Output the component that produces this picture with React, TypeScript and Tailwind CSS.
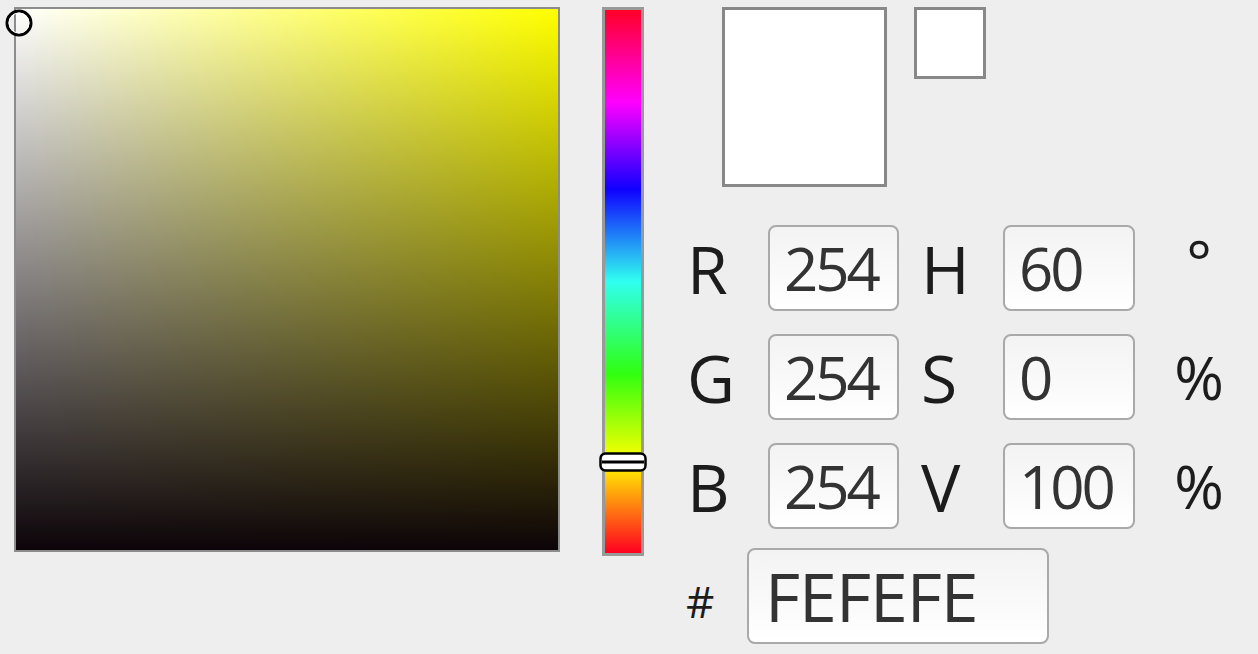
import React from "react";

const font = { fontFamily: '"Open Sans", "Noto Sans", sans-serif' };

function Field({ value, w = "w-[131px]" }: { value: string; w?: string }) {
  return (
    <div
      className={`${w} h-[86px] rounded-[8px] border-2 border-[#a9a9a9] bg-linear-to-b from-[#f3f3f3] to-white flex items-center pl-[14px] text-[60px] leading-none tracking-[-3px] text-[#333]`}
    >
      {value}
    </div>
  );
}

export default function App() {
  const rows = [
    { l: "R", v: "254", l2: "H", v2: "60", u: "°" },
    { l: "G", v: "254", l2: "S", v2: "0", u: "%" },
    { l: "B", v: "254", l2: "V", v2: "100", u: "%" },
  ];

  return (
    <div
      className="w-[1258px] h-[654px] bg-[#eeeeee] flex items-start pl-[14px] pt-[7px] overflow-hidden"
      style={font}
    >
      {/* saturation / value square */}
      <div className="relative w-[546px] h-[545px] border-2 border-[#8c8c8c] shrink-0">
        <div className="w-full h-full bg-[#ffff00]">
          <div className="w-full h-full bg-linear-to-r from-white to-[#ffffff00]">
            <div className="w-full h-full bg-linear-to-t from-[#0c0408] to-[#0c040800]" />
          </div>
        </div>
        <svg
          className="absolute left-[-12px] top-[-1px]"
          width="30"
          height="30"
          viewBox="0 0 30 30"
        >
          <circle cx="15" cy="15" r="12" fill="none" stroke="#000" strokeWidth="3" />
          <circle cx="15" cy="15" r="10" fill="none" stroke="#fff" strokeWidth="1" />
        </svg>
      </div>

      {/* hue bar */}
      <div className="relative ml-[42px] w-[42px] h-[549px] border-[3px] border-[#999] shrink-0">
        <div className="w-full h-full bg-[linear-gradient(to_bottom,#ff0028_0%,#ff00ff_17%,#1000ff_33%,#30fff0_50%,#30ff10_67%,#ffff00_83%,#ff0020_100%)]" />
        <svg
          className="absolute left-[-6px] top-[442px]"
          width="48"
          height="20"
          viewBox="0 0 48 20"
        >
          <rect x="1.5" y="1.5" width="45" height="17" rx="5" fill="#fff" stroke="#000" strokeWidth="2.5" />
          <line x1="3" y1="10" x2="45" y2="10" stroke="#000" strokeWidth="3" />
        </svg>
      </div>

      {/* right panel */}
      <div className="ml-[42px] flex flex-col">
        <div className="ml-[36px] flex items-start gap-[27px]">
          <div className="w-[165px] h-[180px] border-[3px] border-[#888] bg-white" />
          <div className="w-[72px] h-[72px] border-[3px] border-[#888] bg-white" />
        </div>

        <div className="mt-[38px] grid grid-cols-[82px_131px_104px_132px_128px] gap-y-[23px]">
          {rows.map((r) => (
            <React.Fragment key={r.l}>
              <div className="h-[86px] flex items-center pl-[1px] text-[66px] leading-none text-[#1c1c1c]">
                {r.l}
              </div>
              <Field value={r.v} />
              <div className="h-[86px] flex items-center pl-[22px] text-[66px] leading-none text-[#1c1c1c]">
                {r.l2}
              </div>
              <Field value={r.v2} w="w-[132px]" />
              <div
                className={`h-[86px] flex justify-center text-[#1c1c1c] leading-none ${
                  r.u === "°" ? "items-start pt-[6px] text-[60px]" : "items-center text-[60px]"
                }`}
              >
                {r.u}
              </div>
            </React.Fragment>
          ))}
        </div>

        <div className="mt-[19px] flex items-center">
          <div className="w-[61px] pt-[10px] text-[44px] leading-none text-[#1c1c1c]">#</div>
          <div className="w-[302px] h-[96px] rounded-[8px] border-2 border-[#a9a9a9] bg-linear-to-b from-[#f3f3f3] to-white flex items-center pl-[16px] text-[68px] leading-none tracking-[-1px] text-[#333]">
            FEFEFE
          </div>
        </div>
      </div>
    </div>
  );
}
